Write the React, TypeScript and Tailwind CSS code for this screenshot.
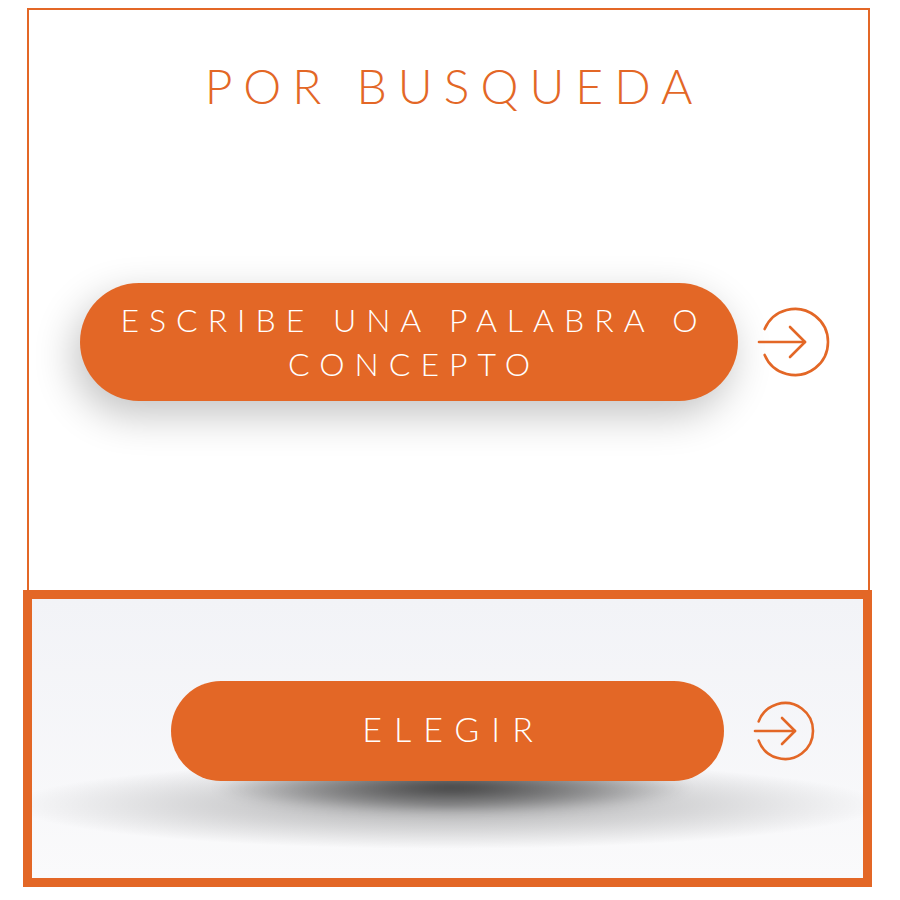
import React from "react";

const ORANGE = "#e36726";

function ArrowCircle({ size, r, gapDeg, lineStart, tip, head }: { size: number; r: number; gapDeg: number; lineStart: number; tip: number; head: number }) {
  const c = size / 2;
  const a = (gapDeg * Math.PI) / 180;
  const x = c - r * Math.cos(a);
  const y1 = c - r * Math.sin(a);
  const y2 = c + r * Math.sin(a);
  return (
    <svg width={size} height={size} viewBox={`0 0 ${size} ${size}`} fill="none" stroke={ORANGE} strokeWidth={2.6} strokeLinecap="round" strokeLinejoin="round">
      <path d={`M ${x} ${y1} A ${r} ${r} 0 1 1 ${x} ${y2}`} />
      <path d={`M ${lineStart} ${c} L ${tip} ${c}`} />
      <path d={`M ${tip - head} ${c - head} L ${tip} ${c} L ${tip - head} ${c + head}`} />
    </svg>
  );
}

export default function App() {
  return (
    <div className="w-[900px] h-[900px] bg-white flex flex-col" style={{ fontFamily: "Lato, 'Open Sans', sans-serif" }}>
      <div className="ml-[27px] mt-[8px] w-[843px] h-[582px] shrink-0 border-2 border-b-0 border-[#e36726] flex flex-col">
        <h1 className="mt-[52px] text-center text-[48px] leading-[48px] font-light tracking-[11px] pl-[11px] text-[#e36726]">
          POR BUSQUEDA
        </h1>
        <div className="mt-[173px] flex items-center">
          <div className="ml-[51px] w-[658px] h-[118px] rounded-full bg-[#e36726] shadow-[-6px_14px_40px_rgba(0,0,0,0.24)] flex items-center justify-center">
            <p className="text-white text-center text-[32px] leading-[44px] font-light tracking-[10px] pl-[10px]">
              ESCRIBE UNA PALABRA O<br />CONCEPTO
            </p>
          </div>
          <div className="ml-[18px]">
            <ArrowCircle size={78} r={33} gapDeg={23} lineStart={3} tip={49} head={15} />
          </div>
        </div>
      </div>
      <div className="ml-[23px] w-[849px] h-[297px] shrink-0 border-[9px] border-[#e36726] bg-gradient-to-b from-[#f2f3f7] to-[#fafafb] relative overflow-hidden">
        <div className="absolute left-[-20px] top-[162px] w-[870px] h-[88px] bg-[radial-gradient(closest-side,rgba(0,0,0,0.3),rgba(0,0,0,0.14)_55%,transparent)]" />
        <div className="absolute left-[180px] top-[162px] w-[480px] h-[52px] blur-[5px] bg-[radial-gradient(closest-side,rgba(0,0,0,0.7),rgba(0,0,0,0.3)_60%,transparent)]" />
        <div className="relative mt-[82px] flex items-center">
          <div className="ml-[139px] w-[553px] h-[100px] rounded-full bg-[#e36726] flex items-center justify-center">
            <span className="text-white text-[34px] leading-[40px] font-light tracking-[12px] pl-[12px] -mt-[4px]">ELEGIR</span>
          </div>
          <div className="ml-[28px]">
            <ArrowCircle size={66} r={28} gapDeg={20} lineStart={3} tip={43} head={13} />
          </div>
        </div>
      </div>
    </div>
  );
}
